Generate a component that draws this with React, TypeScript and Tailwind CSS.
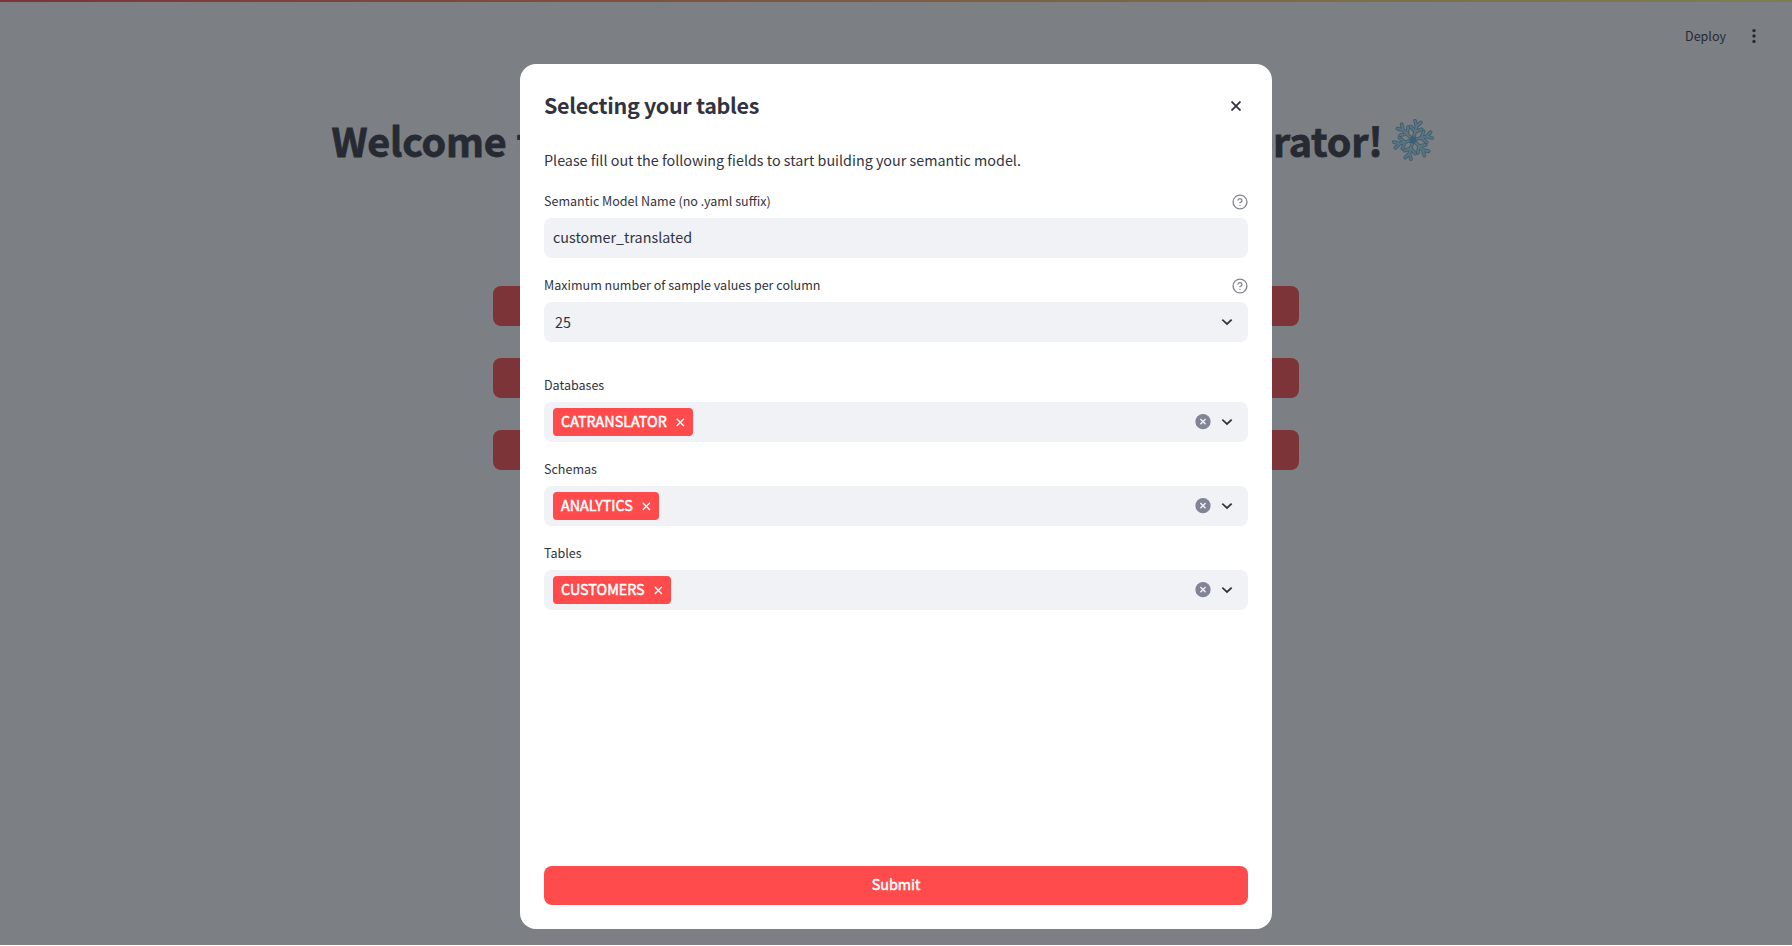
import React from "react";

function HelpIcon() {
  return (
    <svg width="16" height="16" viewBox="0 0 24 24" fill="none" stroke="#83848c" strokeWidth="2" strokeLinecap="round" strokeLinejoin="round">
      <circle cx="12" cy="12" r="10.4" />
      <path d="M9.09 9a3 3 0 0 1 5.83 1c0 2-3 3-3 3" />
      <path d="M12 17h.01" />
    </svg>
  );
}

function Chevron() {
  return (
    <svg width="24" height="24" viewBox="0 0 24 24" fill="none" stroke="#31333f" strokeWidth="1.8" strokeLinecap="square">
      <path d="M8 10.3L12 14L16 10.3" />
    </svg>
  );
}

function ClearIcon() {
  return (
    <svg width="16" height="16" viewBox="0 0 16 16">
      <circle cx="8" cy="7.7" r="7.6" fill="#808495" />
      <path d="M5.4 5.1l5.2 5.2M10.6 5.1l-5.2 5.2" stroke="#f0f2f6" strokeWidth="1.4" fill="none" />
    </svg>
  );
}

function Snowflake() {
  const arms = [0, 60, 120, 180, 240, 300];
  const arm = "M0 0V-14.5M0 -8.5L-5.6 -12.5M0 -8.5L5.6 -12.5M0 -14L-3 -19M0 -14L3 -19";
  return (
    <svg width="44" height="44" viewBox="-22 -22 44 44" fill="none" strokeLinecap="round" strokeLinejoin="round">
      {arms.map((a) => (
        <path key={a} d={arm} transform={`rotate(${a + 15})`} stroke="#6fb2d2" strokeWidth="3.8" />
      ))}
      {arms.map((a) => (
        <path key={a} d={arm} transform={`rotate(${a + 15})`} stroke="#b4e8f8" strokeWidth="1.8" />
      ))}
      <circle r="3.4" fill="#62b4e8" />
    </svg>
  );
}

function Label({ text, help }: { text: string; help?: boolean }) {
  return (
    <div className="flex h-6 items-center justify-between pb-px text-[12.54px] leading-[22px]">
      <span className="pb-0.5">{text}</span>
      {help && <HelpIcon />}
    </div>
  );
}

function MultiSelect({ label, value, width }: { label: string; value: string; width: string }) {
  return (
    <div>
      <Label text={label} />
      <div className="mt-1 flex h-10 items-center rounded-lg bg-[#f0f2f6] pl-[9px] pr-[9px]">
        <div className={`flex h-7 items-center justify-between rounded bg-[#ff4b4b] pl-2 pr-2 text-[14.33px] text-white ${width}`}>
          <span className="pb-0.5 leading-6 [-webkit-text-stroke:0.5px_white]">{value}</span>
          <svg width="10" height="10" viewBox="0 0 10 10" stroke="white" strokeWidth="1.4">
            <path d="M1.7 1.7l7.2 7.2M8.9 1.7l-7.2 7.2" />
          </svg>
        </div>
        <div className="ml-auto flex items-center gap-1">
          <ClearIcon />
          <Chevron />
        </div>
      </div>
    </div>
  );
}

export default function App() {
  return (
    <div className="relative h-[946px] w-full overflow-hidden bg-white font-['Noto_Sans_CJK_SC','Noto_Sans',sans-serif] text-[#31333f]">
      <div className="h-0.5 bg-linear-to-r from-[#ff4b4b] to-[#fffd80]" />
      <header className="flex h-[68px] items-center justify-end gap-[19px] pr-[29px] text-[12.54px]">
        <span>Deploy</span>
        <svg width="18" height="18" viewBox="0 0 18 18" fill="#31333f">
          <circle cx="9" cy="3.6" r="1.7" />
          <circle cx="9" cy="9" r="1.7" />
          <circle cx="9" cy="14.4" r="1.7" />
        </svg>
      </header>
      <h1 className="mt-10 flex h-[60px] items-center justify-center gap-[8px] pr-[26px] text-[39.4px] leading-[60px] font-bold tracking-[-0.2px] whitespace-nowrap [word-spacing:1.6px] [-webkit-text-stroke:0.8px_#31333f]">
        <span>Welcome to the Snowflake Semantic Model Generator!</span>
        <Snowflake />
      </h1>
      <div className="mx-auto mt-[116px] flex w-[806px] flex-col gap-8">
        <div className="h-10 rounded-lg bg-[#ff4b4b]" />
        <div className="h-10 rounded-lg bg-[#ff4b4b]" />
        <div className="h-10 rounded-lg bg-[#ff4b4b]" />
      </div>

      <div className="absolute inset-x-0 top-0 bottom-px bg-[rgba(30,36,42,0.583)] pt-16">
        <div role="dialog" className="mx-auto flex h-[865px] w-[752px] flex-col rounded-2xl bg-white px-6 pb-6">
          <div className="flex h-[84px] items-center justify-between pr-[7px] text-[21.5px] font-bold tracking-[-0.33px]">
            <h2 className="pb-0.5">Selecting your tables</h2>
            <svg width="10" height="10" viewBox="0 0 10 10" stroke="#31333f" strokeWidth="1.8">
              <path d="M0.5 0.5l9 9M9.5 0.5l-9 9" />
            </svg>
          </div>
          <p className="h-[42px] text-[14.33px] leading-6">Please fill out the following fields to start building your semantic model.</p>
          <Label text="Semantic Model Name (no .yaml suffix)" help />
          <div className="mt-1 flex h-10 items-center rounded-lg bg-[#f0f2f6] pb-0.5 pl-[9px] text-[14.33px]">customer_translated</div>
          <div className="mt-4">
            <Label text="Maximum number of sample values per column" help />
            <div className="mt-1 flex h-10 items-center justify-between rounded-lg bg-[#f0f2f6] pl-[11px] pr-[9px] text-[14.33px]">
              <span>25</span>
              <Chevron />
            </div>
          </div>
          <div className="mt-8 flex flex-col gap-4">
            <MultiSelect label="Databases" value="CATRANSLATOR" width="w-[140px]" />
            <MultiSelect label="Schemas" value="ANALYTICS" width="w-[106px]" />
            <MultiSelect label="Tables" value="CUSTOMERS" width="w-[118px]" />
          </div>
          <button className="mt-auto h-[39px] shrink-0 rounded-lg bg-[#ff4b4b] pb-1 text-[14.33px] text-white [-webkit-text-stroke:0.5px_white]">Submit</button>
        </div>
      </div>
    </div>
  );
}
